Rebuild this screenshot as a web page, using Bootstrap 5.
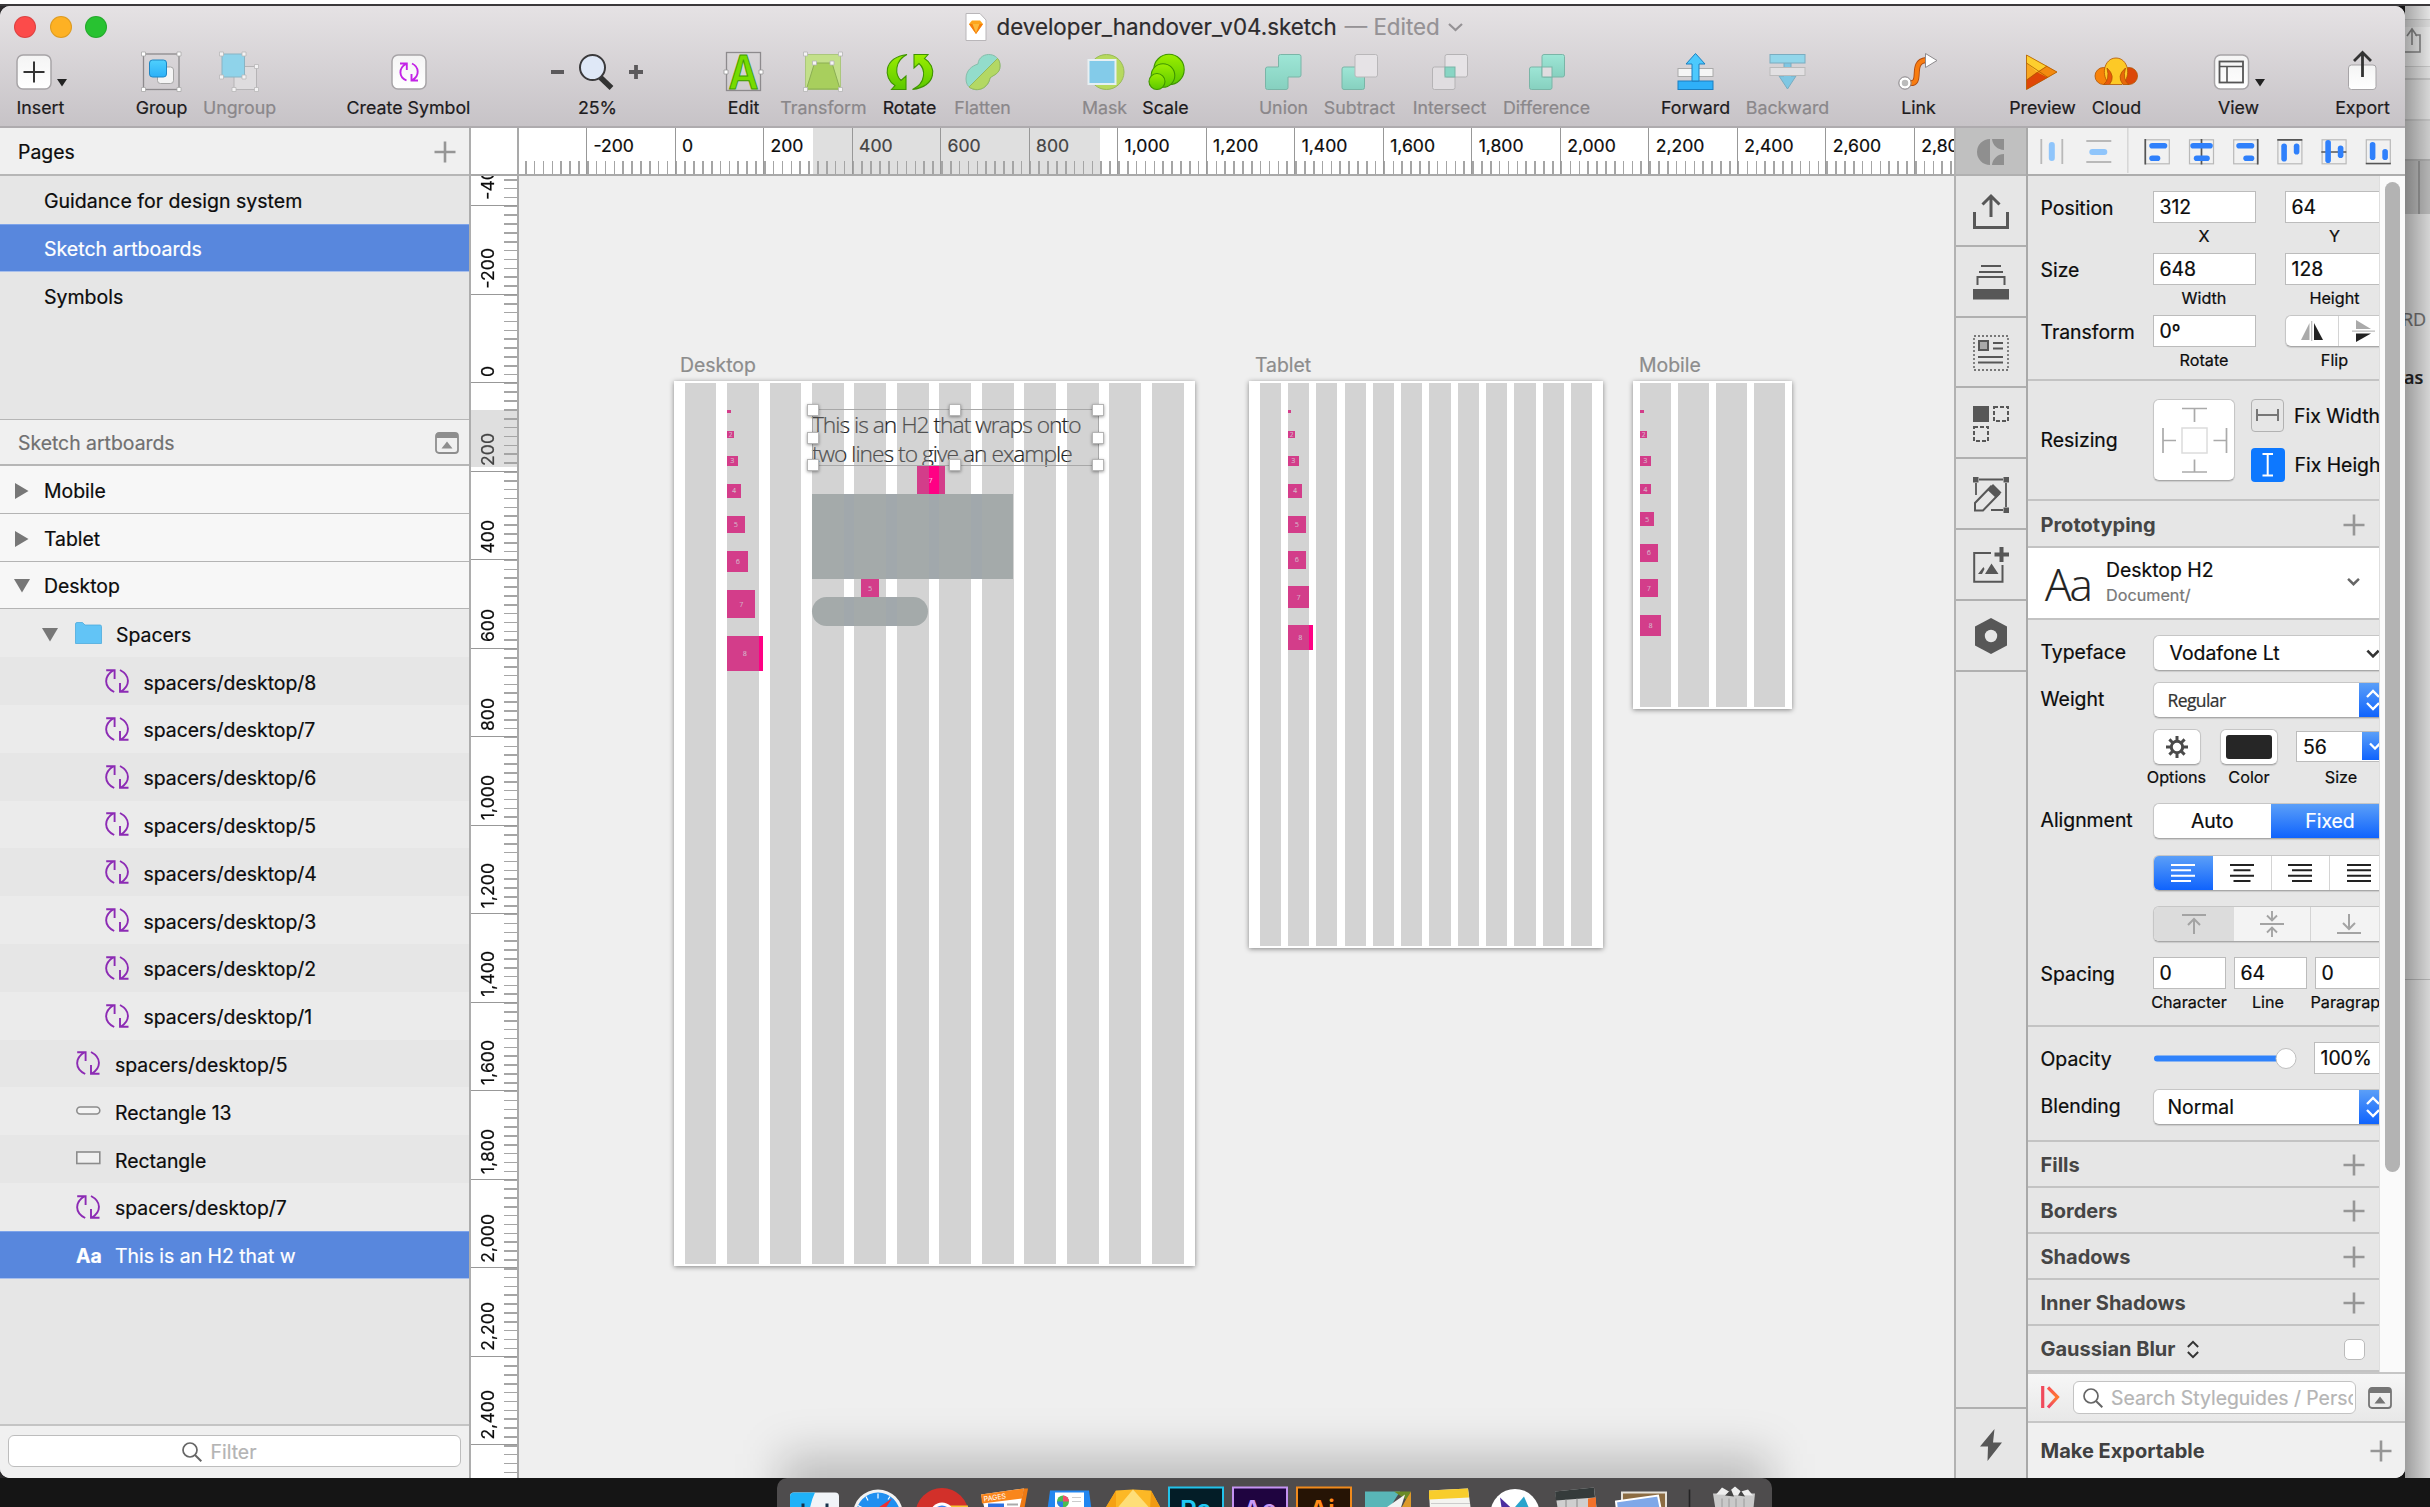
<!DOCTYPE html>
<html lang="en">
<head>
<meta charset="utf-8">
<title>developer_handover_v04.sketch</title>
<link rel="stylesheet" href="https://cdn.jsdelivr.net/npm/bootstrap@5.3.0/dist/css/bootstrap.min.css">
<script src="https://cdn.jsdelivr.net/npm/bootstrap@5.3.0/dist/js/bootstrap.bundle.min.js"></script>
<style>
:root{--u:.44265px;--line:#b6b6b6}
body{width:2430px;height:1507px;margin:0;overflow:hidden;background:#151515;font-family:Inter,"Liberation Sans",sans-serif;font-size:19.4px;line-height:24px;color:#0c0c0c;position:relative;-webkit-text-stroke:.22px}
svg{display:block;flex:none;overflow:visible}
.desk-top{height:6px;background:linear-gradient(#fff 0 4px,#3b393b 4px)}
.stage{height:1472px;background:#d0d0d0}
.appwin{width:2405px;height:1472px;background:#eee;border-radius:10px 10px 10px 10px;overflow:hidden;flex:none;position:relative;z-index:2}
.stage-left{background:linear-gradient(90deg,#2c2a2c 0 1200px,transparent 1200px)}
/* other window peeking out on the right */
.behind{width:25px;position:relative;overflow:hidden;background:#e2e2e2;color:#6f6f6f;font:18px/22px "Open Sans",sans-serif}
.behind .b1{height:14px;background:#efefef;border-bottom:1px solid #cfcfcf}
.behind .b2{height:40px;background:#eee;border-bottom:1px solid #ccc}
.behind .b3{height:13px;background:#e6e6e6;border-bottom:2px solid #c9c9c9}
.behind .b4{height:41px;border-bottom:2px solid #c8c8c8}
.behind .b5{height:40px;background:#d6d6d6;border-bottom:2px solid #b0b0b0}
.behind .b6{height:53px;background:#bdbdbd;padding-left:13px}
.behind .b6 i{display:block;width:2px;height:53px;background:#999}
.behind .b7{height:766px;border-bottom:1px solid #b9b9b9;background:#e0e0e0}
.behind:after{content:"";position:absolute;inset:0;background:linear-gradient(90deg,rgba(0,0,0,.3),rgba(0,0,0,.05))}
/* title and toolbar */
.chrome{height:122px;background:linear-gradient(#e5e2e4,#c7c3c7);border-bottom:2px solid #aeabae;flex:none}
.titlebar{height:42px;padding-left:14px}
.light{width:22px;height:22px;border-radius:50%;margin-right:13.5px;border:1px solid rgba(0,0,0,.12)}
.l-r{background:#fc4b4a}.l-y{background:#fdb124}.l-g{background:#28c231}
.doc-title{margin-left:844px;font-size:22.35px;color:#2d2b2d}
.doc-title span{color:#959295}
.toolset{height:78px}
.tool{flex:none;font-size:17.8px;line-height:22px;color:#1d1b1d;text-align:center;white-space:nowrap}
.tool.off{color:#8a878a}
.tool div{margin:5px -20px 0;padding-left:1px}
.t1{width:60px;margin-left:10px}.t2{width:70px;margin-left:56px}.t3{width:80px;margin-left:3px}.t4{width:130px;margin-left:64px}
.t5{width:100px;margin-left:74px}.t6{width:60px;margin-left:66px}.t7{width:90px;margin-left:5px}.t8{width:60px;margin-left:11px}
.t9{width:60px;margin-left:13px}.t10{width:50px;margin-left:67px}.t11{width:60px;margin-left:6px}.t12{width:60px;margin-left:58px}
.t13{width:80px;margin-left:6px}.t14{width:80px;margin-left:10px}.t15{width:90px;margin-left:12px}.t16{width:70px;margin-left:69px}
.t17{width:80px;margin-left:17px}.t18{width:50px;margin-left:66px}.t19{width:70px;margin-left:64px}.t20{width:60px;margin-left:9px}
.t21{width:60px;margin-left:62px}.t22{width:70px;margin-left:59px}
/* left column */
.layers{width:471px;border-right:2px solid #adadad;background:#e6e6e6;flex:none}
.lhead{height:48px;background:#f0f0f0;border-bottom:2px solid var(--line);padding:2px 13px 0 18px;flex:none}
.lhead.sub{height:47px;border-top:1.5px solid var(--line);color:#707070;padding-right:10px}
.pages-list{height:243px}
.lrow{height:47.8px;display:flex;align-items:center;padding-top:3px;flex:none}
.lrow.page{padding-left:44px;font-size:19.55px}
.lrow.sel{background:#5887dd;color:#fff;border-top:1px solid #7ea4ea;border-bottom:1px solid #a9c0ec}
.lrow.board{background:#f7f7f7;border-bottom:1.5px solid #b4b4b4;padding-left:14px;gap:15px}
.lrow.grp{background:#ebebeb;padding-left:42px}
.lrow.alt{background:#e6e6e6}.lrow.lite{background:#ebebeb}
.lrow.in3{padding-left:105px;gap:14.5px}.lrow.in2{padding-left:76px;gap:15px}
.lrow.in3 svg,.lrow.in2 svg{margin-top:-3px}
.lfoot{height:54px;border-top:2px solid #c4c4c4;background:#f0f0f0;padding:9px 8px}
.filter{height:32px;border:1.5px solid #bdbdbd;border-radius:6px;background:#fff;color:#b4b4b4;gap:9px;padding:2px 31px 0 0}
/* rulers */
.rulerx{height:48px;border-bottom:2px solid #a9a9a9;background:#fff}
.corner{width:48px;border-right:2px solid #a9a9a9;flex:none}
.xticks{position:relative;overflow:hidden;padding-left:67px;font-size:17.6px;background:repeating-linear-gradient(90deg,#a5a5a5 0 1.6px,transparent 1.6px 8.853px) 5.6px 33px/100% 14px no-repeat,linear-gradient(#dfdfdf,#dfdfdf) 294px 0/287px 100% no-repeat #fff}
.xticks span{width:88.53px;flex:none;border-left:1.6px solid #989898;padding:6px 0 0 6.5px}
.xticks .dim,.yticks .dim{color:#444}
.yticks{width:48px;border-right:2px solid #a9a9a9;flex:none;overflow:hidden;font-size:17.6px;background:repeating-linear-gradient(#a5a5a5 0 1.6px,transparent 1.6px 8.853px) 33px 2.6px/14px 100% no-repeat,linear-gradient(#dfdfdf,#dfdfdf) 0 234px/100% 57px no-repeat #fff}
.yticks div{height:88.53px;flex:none;border-bottom:1.6px solid #989898;display:flex;align-items:flex-end;padding:0 0 5px 6px;line-height:22px}
.yticks div:first-child{height:30px}
.yticks span{writing-mode:vertical-rl;transform:rotate(180deg);white-space:nowrap}
/* canvas */
.board-area{position:relative;overflow:hidden;background:#efefef}
.board-area:after{content:"";position:absolute;left:262px;bottom:-50px;width:988px;height:74px;background:rgba(0,0,0,.2);filter:blur(22px)}
.artboard{position:absolute;top:205.2px;background:#fff;box-shadow:0 1px 5px rgba(0,0,0,.45)}
.artboard .cap{position:absolute;left:6px;top:-28.5px;color:#8c8c8c;font-size:19.4px}
.gridcols{position:absolute;inset:2px 0;display:flex}
.gridcols i{background:rgba(149,149,149,.41);flex:none}
.ab-d{left:155px;width:calc(var(--u)*1176);height:885.3px}
.ab-d .gridcols{gap:calc(var(--u)*24);padding-left:calc(var(--u)*24)}.ab-d .gridcols i{width:calc(var(--u)*72)}
.ab-t{left:730px;width:calc(var(--u)*800);height:566.6px}
.ab-t .gridcols{gap:calc(var(--u)*16);padding-left:calc(var(--u)*24)}.ab-t .gridcols i{width:calc(var(--u)*48)}
.ab-m{left:1114px;width:calc(var(--u)*360);height:327.5px}
.ab-m .gridcols{gap:calc(var(--u)*16);padding-left:calc(var(--u)*16)}.ab-m .gridcols i{width:calc(var(--u)*70)}
.sq-col{position:absolute;top:calc(var(--u)*64);display:flex;flex-direction:column;gap:calc(var(--u)*40)}
.ab-d .sq-col{left:calc(var(--u)*120)}.ab-t .sq-col{left:calc(var(--u)*88)}.ab-m .sq-col{left:calc(var(--u)*16)}
.sq{background:#ff0084;color:#ffd0ea;display:flex;align-items:center;justify-content:center;font:300 6.5px/7px "Open Sans",sans-serif;overflow:hidden}
.s8{width:3.54px;height:3.54px;font-size:3px}.s16{width:7.08px;height:7.08px}.s24{width:10.62px;height:10.62px}.s32{width:14.16px;height:14.16px}.s40{width:17.7px;height:17.7px}.s48{width:21.25px;height:21.25px}.s56{width:24.8px;height:24.8px}.s64{width:28.33px;height:28.33px}.s80{width:35.4px;height:35.4px}
.free{position:absolute}
.h2text{left:137.9px;top:28.3px;width:287px;font:300 22.8px/28.3px "Open Sans",sans-serif;letter-spacing:-1px;color:#222;padding-top:2px;white-space:nowrap}
.gap-seven{left:242.5px;top:85px}.gap-five{left:187.2px;top:198.3px}
.box1,.box2{background:repeating-linear-gradient(90deg,#a4aaaa 0 31.9px,#a1a8ac 31.9px 42.5px)}
.box1{left:137.9px;top:113.3px;width:201.2px;height:85px}
.box2{left:137.9px;top:216px;width:116.2px;height:28.6px;border-radius:15px}
.selbox{left:137.9px;top:28.3px;width:286.8px;height:56.7px;border:1px solid #a8a8a8}
.selbox b{position:absolute;width:12px;height:12px;background:#fff;border:1px solid #b5b5b5;box-shadow:0 1px 3px rgba(0,0,0,.4);margin:-6px}
/* plugin strip */
.plug{width:74px;border-left:2px solid #b2b2b2;border-right:2px solid #a9a9a9;background:#e6e6e6;flex:none}
.plug div{height:70.8px;border-bottom:2px solid #b0b0b0;display:flex;align-items:center;justify-content:center;padding-top:2px}
.plug div:first-child{height:48px;background:#c0c0c0}
.plug div:last-child{border-top:2px solid #b0b0b0;border-bottom:0;margin-top:auto;height:71px}
/* inspector */
.insp{width:377px;flex:none;background:#e6e6e6}
.alignbar{height:48px;border-bottom:2px solid #adadad;background:#f1f1f1;padding:2px 0 0 13px;flex:none}
.props{width:351px;overflow:hidden;flex:none}
.sec{border-bottom:2px solid #c3c3c3;padding-left:12.5px}
.frow{display:flex;align-items:flex-start;white-space:nowrap}
.frow>.nm{width:112px;flex:none;line-height:31px;padding-top:2px}
.inp{height:31.5px;border:1.5px solid #bcbcbc;background:#fff;padding-left:6px;line-height:31.5px;flex:none}
.cellw{flex:none;text-align:center}
.tiny{font-size:16.2px;line-height:22px}
.subl{margin-top:2px}
.w103{width:103px}.ml30{margin-left:29px}
.pbtn{background:#fff;border:1px solid #c6c6c6;border-bottom-color:#a8a8a8;border-radius:6px;height:36px;box-shadow:0 1px 1px rgba(0,0,0,.12);flex:none}
.open-r{border-radius:6px 0 0 6px;border-right:0}
.stepper{width:40px;align-self:stretch;background:linear-gradient(#5b9ff8,#0f63fd);padding-left:7px;display:flex;align-items:center;flex:none}
.bhead{height:46px;border-bottom:2px solid #c3c3c3;padding:2px 14.5px 0 12.5px;font-weight:700;font-size:20px;color:#454545;display:flex;align-items:center;justify-content:space-between;-webkit-text-stroke:0}
.sbar{width:26px;background:#fafafa;border-left:1px solid #dedede;padding:6px 5px}
.sbar i{display:block;width:14.5px;height:990px;border-radius:8px;background:#b3b3b3}
.segon{background:linear-gradient(#5b9ff8,#0f63fd);color:#fff}
.seg{display:flex;overflow:hidden}
.seg>div{display:flex;align-items:center;justify-content:center;height:100%;flex:none}
.seg>div+div{border-left:1px solid #d4d4d4}
.sgbar{height:51px;border-top:2px solid #c6c6c6;border-bottom:2px solid #c6c6c6;background:linear-gradient(#f6f6f6,#e8e8e8);padding:0 13px}
.sginput{width:283px;height:33px;margin-left:14px;border:1.5px solid #c3c3c3;border-radius:6px;background:#fff;color:#b5b5b5;padding:1px 2px 0 9px;overflow:hidden}
.sginput span{overflow:hidden;white-space:nowrap;flex:1}
.mexp{height:55px;background:#f0f0f0;padding:0 13px 0 12.5px;font-weight:700;font-size:20px;color:#404040;-webkit-text-stroke:0}
/* dock */
.dock{left:777px;top:1477.5px;width:995px;height:44px;background:#4e4c4d;border-radius:10px 10px 0 0;z-index:4}
</style>
</head>
<body>
<svg width="0" height="0" class="position-absolute">
<defs>
<linearGradient id="gw" x1="0" y1="0" x2="0" y2="1"><stop offset="0" stop-color="#f4f4f4"/><stop offset="1" stop-color="#fff"/></linearGradient>
<linearGradient id="gg" x1="0" y1="0" x2="0" y2="1"><stop offset="0" stop-color="#9bee00"/><stop offset="1" stop-color="#5bc800"/></linearGradient>
<linearGradient id="gb" x1="0" y1="0" x2="0" y2="1"><stop offset="0" stop-color="#4fd0fd"/><stop offset="1" stop-color="#2bb0f8"/></linearGradient>
<linearGradient id="gt" x1="0" y1="0" x2="0" y2="1"><stop offset="0" stop-color="#9ee6d6"/><stop offset="1" stop-color="#86d0bf"/></linearGradient>
<linearGradient id="gz" x1="0" y1="0" x2="0" y2="1"><stop offset="0" stop-color="#fa5252"/><stop offset=".5" stop-color="#ff7a2e"/><stop offset="1" stop-color="#ef3f6a"/></linearGradient>
<symbol id="sym" viewBox="0 0 24 24"><path d="M9.2 23C-1.5 17.500-1.500 7 9 1M1.200 1.300H9.600V10M15 1C25.500 6.500 25.500 17 15.500 22.800M23.500 22.700H15V14" fill="none" stroke="#8c2bb4" stroke-width="1.9"/></symbol>
<symbol id="plus" viewBox="0 0 22 22"><path d="M11 .500V21.500M.500 11H21.500" stroke="#969696" stroke-width="2.600" fill="none"/></symbol>
<symbol id="arch" viewBox="0 0 24 22"><rect x="1" y="1" width="22" height="20" rx="3" fill="none" stroke="currentColor" stroke-width="1.800"/><path d="M1 6V3Q1 1 3 1H21Q23 1 23 3V6ZM6.500 16.500L12 9.500L17.500 16.500Z" fill="currentColor"/></symbol>
<symbol id="mag" viewBox="0 0 20 20"><circle cx="8" cy="8" r="7" fill="none" stroke="#666" stroke-width="1.700"/><path d="M13 13L19.300 19.300" stroke="#666" stroke-width="2"/></symbol>
<symbol id="updn" viewBox="0 0 14 22"><path d="M1 8L7 2L13 8M1 14L7 20L13 14" fill="none" stroke="currentColor" stroke-width="2.300"/></symbol>
<symbol id="chev" viewBox="0 0 12 8"><path d="M1 1.500L6 6.500L11 1.500" fill="none" stroke="currentColor" stroke-width="2.300"/></symbol>
</defs>
</svg>

<div class="desk-top"></div>
<div class="stage d-flex stage-left">
<main class="appwin d-flex flex-column">
<header class="chrome">
  <div class="titlebar d-flex align-items-center">
    <i class="light l-r"></i><i class="light l-y"></i><i class="light l-g"></i>
    <div class="doc-title d-flex align-items-center text-nowrap">
      <svg width="22" height="28" viewBox="0 0 22 28" style="margin-right:10px"><path d="M1 .500H15L21 7V27.500H1Z" fill="#fff" stroke="#b9b6b9"/><path d="M4 11L7 7.500H15L18 11L11 21Z" fill="#fda51c"/><path d="M4 11H18L11 21Z" fill="#f57d0c"/><path d="M7.500 11H14.500L11 20Z" fill="#fdb93a"/></svg>
      developer_handover_v04.sketch<span class="ms-2">— Edited</span>
      <svg class="ms-2" width="15" height="10" viewBox="0 0 15 10"><path d="M1 2L7.500 8L14 2" fill="none" stroke="#959295" stroke-width="2.200"/></svg>
    </div>
  </div>
  <nav class="toolset d-flex">
    <div class="tool t1"><svg width="60" height="44" viewBox="10 48 60 44"><rect x="17" y="55" width="34" height="34" rx="6" fill="url(#gw)" stroke="#a7a4a7" stroke-width="1.500"/><path d="M34 61.500V82.500M23.500 72H44.500" stroke="#333" stroke-width="2"/><path d="M57 79H67L62 86.500Z" fill="#222"/></svg><div>Insert</div></div>
    <div class="tool t2"><svg width="70" height="44" viewBox="126 48 70 44"><rect x="157.500" y="67" width="16" height="16.500" rx="3" fill="#f4f4f4" stroke="#a5a5a5"/><rect x="149.500" y="60" width="17" height="17" rx="3" fill="url(#gb)" stroke="#1e86c4"/><rect x="143.500" y="54" width="35.500" height="35.500" fill="none" stroke="#8d8a8d" stroke-width="1.300"/><path d="M141.500 52h4v4h-4zM177 52h4v4h-4zM141.500 87.500h4v4h-4zM177 87.500h4v4h-4z" fill="#fff" stroke="#aaa" stroke-width=".8"/></svg><div>Group</div></div>
    <div class="tool t3 off"><svg width="80" height="44" viewBox="199 48 80 44"><rect x="234" y="66.500" width="22.500" height="23" fill="#dedcde" stroke="#b6b4b6"/><rect x="222" y="54" width="22.500" height="23" fill="#8fd3ea" stroke="#8ab4c4"/><path d="M219.500 52h4v4h-4zM242 52h4v4h-4zM219.500 75h4v4h-4zM242 75h4v4h-4zM254.500 64.500h4v4h-4zM254.500 87.500h4v4h-4zM232 87.500h4v4h-4z" fill="#f4f3f4" stroke="#b9b7b9" stroke-width=".8"/></svg><div>Ungroup</div></div>
    <div class="tool t4"><svg width="130" height="44" viewBox="343 48 130 44"><rect x="392" y="55" width="34" height="34" rx="6" fill="url(#gw)" stroke="#a7a4a7" stroke-width="1.500"/><path d="M406.500 80.500C398.500 77 398.500 68 406 64M400 63.500H406.800V70M412 63.500C419.500 67 419.500 76 412.500 80M418 80.500H411.500V74" fill="none" stroke="#c324e6" stroke-width="1.900"/></svg><div>Create Symbol</div></div>
    <div class="tool t5"><svg width="100" height="44" viewBox="547 48 100 44"><path d="M551 72H564M629 72H643M636 65V79" stroke="#5b595b" stroke-width="3.800"/><path d="M600 77L611.500 88" stroke="#333" stroke-width="5.500"/><circle cx="592.500" cy="67.500" r="12.500" fill="#dfe8f7" stroke="#3b3a3c" stroke-width="2"/></svg><div>25%</div></div>
    <div class="tool t6"><svg width="60" height="44" viewBox="713 48 60 44"><rect x="726.500" y="52.500" width="34" height="38" fill="none" stroke="#8d8a8d" stroke-width="1.300"/><text x="743.500" y="89" text-anchor="middle" font-family="Inter,sans-serif" font-weight="600" font-size="46" textLength="30" lengthAdjust="spacingAndGlyphs" fill="#76dc00" stroke="#3f9a00" stroke-width="1">A</text><path d="M724 70h4v4h-4zM759 70h4v4h-4z" fill="#fff" stroke="#999" stroke-width=".8"/></svg><div>Edit</div></div>
    <div class="tool t7 off"><svg width="90" height="44" viewBox="778 48 90 44"><rect x="805.500" y="54.500" width="35" height="35" fill="#c3e08a" stroke="#abc77c"/><path d="M814.500 63H832L840 89H806.500Z" fill="#a8cf5d" stroke="#8bae54"/><path d="M803.500 52h4v4h-4zM838.500 52h4v4h-4zM803.500 87.500h4v4h-4zM838.500 87.500h4v4h-4zM812.500 61h4v4h-4zM830 61h4v4h-4z" fill="#f5f4f5" stroke="#b5b5b5" stroke-width=".8"/></svg><div>Transform</div></div>
    <div class="tool t8"><svg width="60" height="44" viewBox="879 48 60 44"><path d="M907 54.500C883 58 883 78 895 85.500L891.500 89.500H906V76L901 80.500C895 75 894 61 907 54.500ZM912.500 89.500C937 86 937 66 924.500 58.500L928 54.500H914V68L919 63.500C925.500 69 926.500 83 912.500 89.500Z" fill="url(#gg)" stroke="#3f9500" stroke-width="1.100"/></svg><div>Rotate</div></div>
    <div class="tool t9 off"><svg width="60" height="44" viewBox="952 48 60 44"><path d="M978 64C979 51 1000 51 1000 66C1000 74 993 75 990 78C988 93 966 94 966 79C966 70 972 66 978 64Z" fill="#93dccb" stroke="#86bdaa"/><path d="M997.500 58.500L969 87C978 93 988 88 990 78C993 75 1000 74 1000 66C1000 62 999 60 997.500 58.500Z" fill="#b3d864" stroke="#97b95c"/></svg><div>Flatten</div></div>
    <div class="tool t10 off"><svg width="50" height="44" viewBox="1079 48 50 44"><circle cx="1106.500" cy="72" r="17.500" fill="#b6d95f" stroke="#9aba5a"/><rect x="1088.500" y="60" width="27" height="24" fill="#83cbe9" stroke="#e7f0f3" stroke-width="2"/></svg><div>Mask</div></div>
    <div class="tool t11"><svg width="60" height="44" viewBox="1135 48 60 44"><g fill="url(#gg)" stroke="#3f9500" stroke-width="1.100"><circle cx="1169" cy="69.500" r="15.200"/><circle cx="1163" cy="75.500" r="11.800"/><circle cx="1157" cy="81.500" r="8"/></g></svg><div>Scale</div></div>
    <div class="tool t12 off"><svg width="60" height="44" viewBox="1253 48 60 44"><path d="M1280.500 54.500H1299Q1301 54.500 1301 56.500V75Q1301 77 1299 77H1288V87.500Q1288 89.500 1286 89.500H1267.500Q1265.500 89.500 1265.500 87.500V69Q1265.500 67 1267.500 67H1278.500V56.500Q1278.500 54.500 1280.500 54.500Z" fill="url(#gt)" stroke="#7ab5a7"/></svg><div>Union</div></div>
    <div class="tool t13 off"><svg width="80" height="44" viewBox="1319 48 80 44"><rect x="1342" y="67" width="22.500" height="22.500" rx="2" fill="url(#gt)" stroke="#7ab5a7"/><rect x="1355" y="54.500" width="22.500" height="22.500" rx="2" fill="#e6e3e6" stroke="#b9b7b9"/></svg><div>Subtract</div></div>
    <div class="tool t14 off"><svg width="80" height="44" viewBox="1409 48 80 44"><rect x="1432.500" y="67" width="22.500" height="22.500" rx="2" fill="#e0dde0" stroke="#b5b3b5"/><rect x="1445" y="54.500" width="22.500" height="22.500" rx="2" fill="#e6e3e6" stroke="#b5b3b5"/><rect x="1445" y="67" width="10" height="10" fill="#88d5c4" stroke="#7ab5a7"/></svg><div>Intersect</div></div>
    <div class="tool t15 off"><svg width="90" height="44" viewBox="1501 48 90 44"><rect x="1529.500" y="67" width="22.500" height="22.500" rx="2" fill="url(#gt)" stroke="#7ab5a7"/><rect x="1542" y="54.500" width="22.500" height="22.500" rx="2" fill="url(#gt)" stroke="#7ab5a7"/><rect x="1542" y="67" width="10" height="10" fill="#e0dde0" stroke="#7ab5a7"/></svg><div>Difference</div></div>
    <div class="tool t16"><svg width="70" height="44" viewBox="1660 48 70 44"><rect x="1678" y="68.500" width="35" height="8" fill="#f5f5f5" stroke="#aaa"/><rect x="1678" y="81" width="35" height="8.500" fill="#2fb0f8" stroke="#1c7fc0"/><path d="M1692 81V64H1686L1695.500 53.500L1705 64H1699V81Z" fill="#4cc9fd" stroke="#1c7fc0"/></svg><div>Forward</div></div>
    <div class="tool t17 off"><svg width="80" height="44" viewBox="1747 48 80 44"><path d="M1784 62V76H1779L1787.500 89L1796 76H1791V62Z" fill="#7fc7e3" stroke="#7aacc0"/><rect x="1770" y="67.500" width="35" height="8" fill="#e2e0e2" stroke="#bbb"/><rect x="1770" y="54.500" width="35" height="8.500" fill="#92d6ea" stroke="#7aacc0"/></svg><div>Backward</div></div>
    <div class="tool t18"><svg width="50" height="44" viewBox="1893 48 50 44"><path d="M1909 83C1924 85 1909 62 1926 60" fill="none" stroke="#b14d12" stroke-width="6"/><path d="M1909 83C1924 85 1909 62 1926 60" fill="none" stroke="#f87c10" stroke-width="4.200"/><circle cx="1905" cy="83" r="4.500" fill="#bbb" stroke="#fff" stroke-width="2.500"/><circle cx="1905" cy="83" r="6.200" fill="none" stroke="#8d8a8d"/><path d="M1925.500 53.500V67.500L1937 60.500Z" fill="#fff" stroke="#8d8a8d"/></svg><div>Link</div></div>
    <div class="tool t19"><svg width="70" height="44" viewBox="2007 48 70 44"><path d="M2026.500 55V89.500L2057 72Z" fill="#f8a71f"/><path d="M2026.500 55L2047 66L2037 72L2026.500 63Z" fill="#fdcf2e"/><path d="M2026.500 80L2037 72L2048 77.500L2026.500 89.500Z" fill="#df4607"/><path d="M2037 72L2047 66L2057 72L2048 77.500Z" fill="#f38a10"/><path d="M2026.500 55V89.500L2057 72ZM2026.500 63L2048 77.500M2026.500 80L2047 66" fill="none" stroke="#b05a00" stroke-width=".8"/></svg><div>Preview</div></div>
    <div class="tool t20"><svg width="60" height="44" viewBox="2086 48 60 44"><g stroke="#b35400" stroke-width=".8"><circle cx="2103.500" cy="76" r="8.500" fill="#f7820a"/><circle cx="2129" cy="76" r="8.500" fill="#dc4808"/><path d="M2110 84.500C2100 76 2104 58 2116 58C2128 58 2132 76 2122 84.500Z" fill="#fdc926"/><path d="M2107 68Q2116 76 2109.500 84.500H2103.500Q2110 80 2107 68Z" fill="#e8590a"/><path d="M2125.500 68Q2116 76 2123 84.500H2129Q2122 80 2125.500 68Z" fill="#e8690a"/></g></svg><div>Cloud</div></div>
    <div class="tool t21"><svg width="60" height="44" viewBox="2208 48 60 44"><rect x="2214.500" y="55" width="34" height="34" rx="6" fill="url(#gw)" stroke="#a7a4a7" stroke-width="1.500"/><rect x="2219.500" y="61.500" width="23.500" height="21" fill="none" stroke="#555" stroke-width="1.800"/><path d="M2219.500 66.500H2243M2227 66.500V82.500" stroke="#555" stroke-width="1.600"/><path d="M2255 79H2265L2260 86.500Z" fill="#222"/></svg><div>View</div></div>
    <div class="tool t22"><svg width="70" height="44" viewBox="2327 48 70 44"><rect x="2348.500" y="65" width="27.500" height="24.500" rx="3" fill="url(#gw)" stroke="#a7a4a7"/><path d="M2362.500 77V54M2354 61L2362.500 52.500L2371 61" fill="none" stroke="#333" stroke-width="2.800"/></svg><div>Export</div></div>
  </nav>
</header>

<div class="d-flex flex-grow-1" style="min-height:0">
<aside class="layers d-flex flex-column">
  <div class="lhead d-flex align-items-center justify-content-between">Pages<svg width="22" height="22"><use href="#plus"/></svg></div>
  <div class="pages-list">
    <div class="lrow page">Guidance for design system</div>
    <div class="lrow page sel">Sketch artboards</div>
    <div class="lrow page">Symbols</div>
  </div>
  <div class="lhead sub d-flex align-items-center justify-content-between">Sketch artboards<svg width="24" height="22" color="#8e8e8e"><use href="#arch"/></svg></div>
  <div class="lrow board"><svg width="15" height="16"><path d="M1 0L14.500 8L1 16Z" fill="#777"/></svg>Mobile</div>
  <div class="lrow board"><svg width="15" height="16"><path d="M1 0L14.500 8L1 16Z" fill="#777"/></svg>Tablet</div>
  <div class="lrow board"><svg width="15" height="14"><path d="M0 0H16L8 13.500Z" fill="#777"/></svg>Desktop</div>
  <div class="lrow grp"><svg width="16" height="14"><path d="M0 0H16L8 13.500Z" fill="#777"/></svg><svg width="27" height="22" style="margin:-4px 14px 0 17px"><path d="M.500 2Q.500 .500 2 .500H7.500L10 3H25Q26.500 3 26.500 4.500V21.500H.500Z" fill="#62c4f6" stroke="#4dabdd" stroke-width=".8"/></svg>Spacers</div>
  <div class="lrow in3 alt"><svg width="24" height="24"><use href="#sym"/></svg>spacers/desktop/8</div>
  <div class="lrow in3 lite"><svg width="24" height="24"><use href="#sym"/></svg>spacers/desktop/7</div>
  <div class="lrow in3 alt"><svg width="24" height="24"><use href="#sym"/></svg>spacers/desktop/6</div>
  <div class="lrow in3 lite"><svg width="24" height="24"><use href="#sym"/></svg>spacers/desktop/5</div>
  <div class="lrow in3 alt"><svg width="24" height="24"><use href="#sym"/></svg>spacers/desktop/4</div>
  <div class="lrow in3 lite"><svg width="24" height="24"><use href="#sym"/></svg>spacers/desktop/3</div>
  <div class="lrow in3 alt"><svg width="24" height="24"><use href="#sym"/></svg>spacers/desktop/2</div>
  <div class="lrow in3 lite"><svg width="24" height="24"><use href="#sym"/></svg>spacers/desktop/1</div>
  <div class="lrow in2 alt"><svg width="24" height="24"><use href="#sym"/></svg>spacers/desktop/5</div>
  <div class="lrow in2 lite"><svg width="24" height="12"><rect x=".8" y="2" width="23" height="7" rx="3.500" fill="#f4f4f4" stroke="#8c8c8c" stroke-width="1.600"/></svg>Rectangle 13</div>
  <div class="lrow in2 alt"><svg width="24" height="16"><rect x=".8" y="1" width="23" height="11.500" fill="#f0f0f0" stroke="#8c8c8c" stroke-width="1.600"/></svg>Rectangle</div>
  <div class="lrow in2 lite"><svg width="24" height="24"><use href="#sym"/></svg>spacers/desktop/7</div>
  <div class="lrow in2 sel"><b style="width:24px">Aa</b>This is an H2 that w</div>
  <div class="lfoot mt-auto"><div class="filter d-flex align-items-center justify-content-center"><svg width="20" height="20"><use href="#mag"/></svg>Filter</div></div>
</aside>

<section class="d-flex flex-column flex-grow-1" style="min-width:0">
  <div class="rulerx d-flex">
    <div class="corner"></div>
    <div class="xticks d-flex flex-grow-1">
      <span>-200</span><span>0</span><span>200</span><span class="dim">400</span><span class="dim">600</span><span class="dim">800</span><span>1,000</span><span>1,200</span><span>1,400</span><span>1,600</span><span>1,800</span><span>2,000</span><span>2,200</span><span>2,400</span><span>2,600</span><span>2,800</span>
    </div>
  </div>
  <div class="d-flex flex-grow-1" style="min-height:0">
    <div class="yticks d-flex flex-column">
      <div><span>-400</span></div><div><span>-200</span></div><div><span>0</span></div><div><span class="dim">200</span></div><div><span>400</span></div><div><span>600</span></div><div><span>800</span></div><div><span>1,000</span></div><div><span>1,200</span></div><div><span>1,400</span></div><div><span>1,600</span></div><div><span>1,800</span></div><div><span>2,000</span></div><div><span>2,200</span></div><div><span>2,400</span></div>
    </div>
    <div class="board-area flex-grow-1">
      <div class="artboard ab-d"><span class="cap">Desktop</span>
        <div class="sq-col"><div class="sq s8"></div><div class="sq s16">2</div><div class="sq s24">3</div><div class="sq s32">4</div><div class="sq s40">5</div><div class="sq s48">6</div><div class="sq s64">7</div><div class="sq s80">8</div></div>
        <div class="free h2text">This is an H2 that wraps onto<br>two lines to give an example</div>
        <div class="free sq s64 gap-seven">7</div><div class="free sq s40 gap-five">5</div>
        <div class="gridcols"><i></i><i></i><i></i><i></i><i></i><i></i><i></i><i></i><i></i><i></i><i></i><i></i></div>
        <div class="free box1"></div><div class="free box2"></div>
        <div class="free selbox"><b style="left:0;top:0"></b><b style="left:50%;top:0"></b><b style="left:100%;top:0"></b><b style="left:0;top:50%"></b><b style="left:100%;top:50%"></b><b style="left:0;top:100%"></b><b style="left:50%;top:100%"></b><b style="left:100%;top:100%"></b></div>
      </div>
      <div class="artboard ab-t"><span class="cap">Tablet</span>
        <div class="sq-col"><div class="sq s8"></div><div class="sq s16">2</div><div class="sq s24">3</div><div class="sq s32">4</div><div class="sq s40">5</div><div class="sq s40">6</div><div class="sq s48">7</div><div class="sq s56">8</div></div>
        <div class="gridcols"><i></i><i></i><i></i><i></i><i></i><i></i><i></i><i></i><i></i><i></i><i></i><i></i></div>
      </div>
      <div class="artboard ab-m"><span class="cap">Mobile</span>
        <div class="sq-col"><div class="sq s8"></div><div class="sq s16">2</div><div class="sq s24">3</div><div class="sq s24">4</div><div class="sq s32">5</div><div class="sq s40">6</div><div class="sq s40">7</div><div class="sq s48">8</div></div>
        <div class="gridcols"><i></i><i></i><i></i><i></i></div>
      </div>
    </div>
  </div>
</section>

<aside class="plug d-flex flex-column">
  <div><svg width="26" height="26"><path d="M12 0V26A13 13 0 0 1 12 0ZM14 0H26V11A12 12 0 0 1 14 0ZM14 26H26V15A12 12 0 0 0 14 26Z" fill="#8f8f8f"/></svg></div>
  <div><svg width="36" height="36"><path d="M1.500 19V34.500H34.500V19M18 24V3M9.500 11.500L18 3L26.500 11.500" fill="none" stroke="#575757" stroke-width="3"/></svg></div>
  <div><svg width="36" height="36"><path d="M8 2H28M6 8H30M4.500 21V13H31.500V21" fill="none" stroke="#575757" stroke-width="2"/><rect x="0" y="25" width="36" height="10.500" fill="#575757"/></svg></div>
  <div><svg width="36" height="36"><rect x="1" y="1" width="34" height="34" fill="none" stroke="#777" stroke-width="1.800" stroke-dasharray="2 2"/><rect x="6" y="6" width="9" height="9" fill="#aaa" stroke="#575757" stroke-width="2"/><path d="M20 8H30M20 13.500H30M5 22H30M5 27.500H30" stroke="#575757" stroke-width="2"/></svg></div>
  <div><svg width="36" height="36"><rect width="16" height="16" fill="#575757"/><rect x="21" y="1" width="14" height="14" fill="none" stroke="#575757" stroke-width="2" stroke-dasharray="4 2"/><rect x="1" y="21" width="14" height="14" fill="none" stroke="#575757" stroke-width="2" stroke-dasharray="4 2"/></svg></div>
  <div><svg width="36" height="36"><path d="M6 2.500H30M3 6V18M33 6V30M18 33H30" fill="none" stroke="#575757" stroke-width="1.800"/><path d="M0 0h5.500v5.500H0zM30.500 0h5.500v5.500h-5.500zM30.500 30.500h5.500v5.500h-5.500z" fill="#575757"/><path d="M2 33.500V26L18 9.500L26 17L10 33.500Z" fill="none" stroke="#575757" stroke-width="2"/><path d="M14.500 13L20 7L28.500 15.500L23 21Z" fill="#575757"/></svg></div>
  <div><svg width="36" height="36"><path d="M18 6H1.200V34.800H29.500V18" fill="none" stroke="#575757" stroke-width="2"/><path d="M28.500 0V15M21.500 7.500H36" stroke="#575757" stroke-width="4"/><path d="M12 27L18.500 16.500L25.500 27ZM5 27L10.500 20L11.500 22L9 27Z" fill="#575757"/></svg></div>
  <div><svg width="36" height="36"><path d="M18 0L34 8.500V27.500L18 36L2 27.500V8.500Z" fill="#575757"/><circle cx="18" cy="18" r="6.200" fill="#e6e6e6"/></svg></div>
  <div><svg width="22" height="32"><path d="M14.500 0L0 17.500H8L7.500 32L22 13.500H13Z" fill="#575757"/></svg></div>
</aside>

<aside class="insp d-flex flex-column">
  <div class="alignbar d-flex align-items-center">
    <svg width="351" height="26" viewBox="0.7 0 351 26">
      <path d="M1 0V25M22 0V25M46 2H71M46 23H71" stroke="#b9b9b9" stroke-width="1.800"/><rect x="8.500" y="3" width="6" height="19" rx="3" fill="#8fc5fb"/><rect x="49" y="10" width="18" height="6" rx="3" fill="#8fc5fb"/><path d="M87.500-11V34" stroke="#d5d5d5" stroke-width="1.500"/>
      <g fill="none" stroke="#b9b9b9" stroke-width="1.200"><rect x="105" y=".800" width="24" height="24"/><rect x="149.200" y=".800" width="24" height="24"/><rect x="193.400" y=".800" width="24" height="24"/><rect x="237.600" y=".800" width="24" height="24"/><rect x="281.800" y=".800" width="24" height="24"/><rect x="326" y=".800" width="24" height="24"/></g>
      <path d="M105 0V25.500M161.200 0V25.500M217.400 0V25.500M237 .800H262M281 13H306M325.500 24.500H350.500" stroke="#555" stroke-width="1.700"/>
      <g fill="#2f80fb"><rect x="109" y="4" width="18" height="5.600" rx="2.800"/><rect x="109" y="16.500" width="11" height="5.600" rx="2.800"/><rect x="150" y="4" width="22.500" height="5.600" rx="2.800"/><rect x="153.500" y="16.500" width="16" height="5.600" rx="2.800"/><rect x="196" y="4" width="18" height="5.600" rx="2.800"/><rect x="203" y="16.500" width="11" height="5.600" rx="2.800"/><rect x="241" y="4.500" width="5.600" height="18" rx="2.800"/><rect x="253.500" y="4.500" width="5.600" height="11" rx="2.800"/><rect x="285" y="1" width="5.600" height="23" rx="2.800"/><rect x="297.500" y="6.500" width="5.600" height="12.500" rx="2.800"/><rect x="329.500" y="3" width="5.600" height="18" rx="2.800"/><rect x="342" y="10" width="5.600" height="11" rx="2.800"/></g>
    </svg>
  </div>
  <div class="d-flex" style="height:1196px">
  <div class="props">
    <div class="sec" style="height:205px;padding-top:15px">
      <div class="frow" style="height:62px"><span class="nm">Position</span><div class="cellw w103"><div class="inp text-start">312</div><div class="tiny subl">X</div></div><div class="cellw w103 ml30"><div class="inp text-start">64</div><div class="tiny subl" style="margin-left:-3px">Y</div></div></div>
      <div class="frow" style="height:62px"><span class="nm">Size</span><div class="cellw w103"><div class="inp text-start">648</div><div class="tiny subl">Width</div></div><div class="cellw w103 ml30"><div class="inp text-start">128</div><div class="tiny subl" style="margin-left:-3px">Height</div></div></div>
      <div class="frow"><span class="nm">Transform</span><div class="cellw w103"><div class="inp text-start">0º</div><div class="tiny subl">Rotate</div></div><div class="cellw w103 ml30"><div class="pbtn open-r seg" style="height:31.500px"><div style="width:52px"><svg width="24" height="20"><path d="M9.500 2V19H1Z" fill="#aaa"/><path d="M14 2V19H23Z" fill="#222"/><path d="M11.700 0V20" stroke="#bbb" stroke-width="1.200"/></svg></div><div style="width:50px"><svg width="24" height="22"><path d="M5 0V9H20Z" fill="#aaa"/><path d="M5 22V13.500H20Z" fill="#222"/><path d="M1 11.200H24" stroke="#bbb" stroke-width="1.200"/></svg></div></div><div class="tiny subl" style="margin-left:-3px">Flip</div></div></div>
    </div>
    <div class="sec frow" style="height:120px;padding-top:18px"><span class="nm" style="padding-top:26px">Resizing</span>
      <div class="pbtn d-flex" style="width:82px;height:82px"><svg width="80" height="80"><path d="M28 8.500H53M40.500 8.500V22M28 72H53M40.500 72V59.500M9 28V53M9 40.500H22M72.500 28V53M72.500 40.500H59.500" fill="none" stroke="#aaa" stroke-width="1.700"/><rect x="28" y="28" width="25" height="25" fill="none" stroke="#dcdcdc" stroke-width="1.500"/></svg></div>
      <div class="d-flex flex-column" style="margin-left:16.500px;gap:16px">
        <div class="d-flex align-items-center"><div style="width:33px;height:33px;border:1.500px solid #b2b2b2;border-radius:4px;padding:4px"><svg width="23" height="22"><path d="M1 5V17M22 5V17M1 11H22" stroke="#777" stroke-width="2"/></svg></div><span style="margin-left:10px">Fix Width</span></div>
        <div class="d-flex align-items-center"><div style="width:33.500px;height:33.500px;background:#0d78ff;border-radius:4px;padding:5px 5px"><svg width="23" height="24"><path d="M6.500 1H17M6.500 22.500H17M11.700 1V22.500" stroke="#fff" stroke-width="2"/></svg></div><span style="margin-left:10px">Fix Height</span></div>
      </div>
    </div>
    <div class="bhead" style="height:47px">Prototyping<svg width="22" height="22"><use href="#plus"/></svg></div>
    <div class="d-flex align-items-center bg-white" style="height:72px;border-bottom:2px solid #c3c3c3;padding:0 19px 0 17px"><span style="font:300 44px/48px 'Open Sans',sans-serif;width:61px;letter-spacing:-2px;color:#222;padding-top:2px">Aa</span><div style="margin-top:-1px"><div style="line-height:26px">Desktop H2</div><div class="tiny" style="color:#777;line-height:25px">Document/</div></div><svg class="ms-auto mb-1" width="13" height="9" color="#666"><use href="#chev"/></svg></div>
    <div class="sec" style="height:407px;padding-top:15px">
      <div class="frow" style="height:47px"><span class="nm">Typeface</span><div class="pbtn open-r d-flex align-items-center" style="width:240px;padding-left:16px">Vodafone Lt<svg style="margin-left:auto;margin-right:13px" width="14" height="9" color="#333"><use href="#chev"/></svg></div></div>
      <div class="frow" style="height:47px"><span class="nm">Weight</span><div class="pbtn open-r d-flex align-items-center overflow-hidden" style="width:246px;padding-left:14px;color:#333"><span style="font:17.500px 'Open Sans',sans-serif;letter-spacing:-.6px">Regular</span><div class="stepper ms-auto text-white"><svg width="14" height="22"><use href="#updn"/></svg></div></div></div>
      <div class="frow" style="height:74px"><span class="nm"></span>
        <div class="cellw" style="width:48px"><div class="pbtn d-flex align-items-center justify-content-center"><svg width="22" height="22" viewBox="-11 -11 22 22"><circle r="5.700" fill="none" stroke="#4a4a4a" stroke-width="3"/><path d="M0-11V-6M0 6V11M-11 0H-6M6 0H11M-7.600-7.600L-4.500-4.500M4.500 4.500L7.600 7.600M-7.600 7.600L-4.500 4.500M4.500-4.500L7.600-7.600" stroke="#4a4a4a" stroke-width="3"/></svg></div><div class="tiny" style="margin:1px -10px">Options</div></div>
        <div class="cellw" style="width:58px;margin-left:19.500px"><div class="pbtn p-1"><div style="height:24px;background:#262626;border-radius:3px;margin:1px 1px"></div></div><div class="tiny" style="margin-top:1px">Color</div></div>
        <div class="cellw" style="width:90px;margin-left:18px"><div class="inp d-flex text-start" style="height:31px;margin:2px 0 3px">56<div class="stepper text-white" style="margin-left:35px;height:28px"><svg width="12" height="8"><use href="#chev"/></svg></div></div><div class="tiny" style="margin-top:4px">Size</div></div>
      </div>
      <div class="frow" style="height:51.500px"><span class="nm">Alignment</span><div class="pbtn open-r seg" style="width:246px"><div style="width:117.500px">Auto</div><div class="segon border-0" style="width:118px">Fixed</div><div class="segon border-0" style="width:12px"></div></div></div>
      <div class="frow" style="height:51.500px"><span class="nm"></span><div class="pbtn open-r seg" style="width:246px"><div class="segon" style="width:59px"><svg width="24" height="20"><path d="M0 2H24M0 7.200H20M0 12.700H24M0 18H20" stroke="#fff" stroke-width="2"/></svg></div><div class="border-0" style="width:58px"><svg width="24" height="20"><path d="M0 2H24M3.500 7.200H20.500M0 12.700H24M3.500 18H20.500" stroke="#222" stroke-width="2"/></svg></div><div style="width:58.500px"><svg width="24" height="20"><path d="M0 2H24M4 7.200H24M0 12.700H24M4 18H24" stroke="#222" stroke-width="2"/></svg></div><div style="width:58px"><svg width="24" height="20"><path d="M0 2H24M0 7.200H24M0 12.700H24M0 18H24" stroke="#222" stroke-width="2"/></svg></div></div></div>
      <div class="frow" style="height:51px"><span class="nm"></span><div class="pbtn open-r seg" style="width:246px;background:#f3f3f3"><div style="width:80.500px;background:#dcdcdc"><svg width="24" height="20"><path d="M0 1H24M12 20V5M6 11L12 5L18 11" fill="none" stroke="#a3a3a3" stroke-width="2"/></svg></div><div class="border-0" style="width:76px"><svg width="24" height="26"><path d="M0 13H24M12 0V9M7 4.500L12 9.500L17 4.500M12 26V17M7 21.500L12 16.500L17 21.500" fill="none" stroke="#a3a3a3" stroke-width="1.900"/></svg></div><div style="width:77px"><svg width="24" height="20"><path d="M0 19H24M12 0V15M6 9L12 15L18 9" fill="none" stroke="#a3a3a3" stroke-width="2"/></svg></div></div></div>
      <div class="frow"><span class="nm">Spacing</span>
        <div class="cellw" style="width:73px"><div class="inp text-start">0</div><div class="tiny" style="margin:2px -8px">Character</div></div>
        <div class="cellw" style="width:73px;margin-left:8px"><div class="inp text-start">64</div><div class="tiny" style="margin-top:2px;margin-left:-4px">Line</div></div>
        <div class="cellw" style="width:80px;margin-left:8px"><div class="inp text-start">0</div><div class="tiny text-start" style="margin-top:2px;margin-left:-4px">Paragraph</div></div>
      </div>
    </div>
    <div class="sec" style="height:115px;padding-top:15px">
      <div class="frow" style="height:47px"><span class="nm">Opacity</span><svg width="134" height="32" style="margin-left:1px"><path d="M3 16.500H125" stroke="#2f82fb" stroke-width="6" stroke-linecap="round"/><circle cx="132" cy="16.500" r="10" fill="#fff" stroke="#c0c0c0"/></svg><div class="inp" style="width:80px;margin-left:26px">100%</div></div>
      <div class="frow"><span class="nm">Blending</span><div class="pbtn open-r d-flex align-items-center overflow-hidden" style="width:246px;padding-left:14px">Normal<div class="stepper ms-auto text-white"><svg width="14" height="22"><use href="#updn"/></svg></div></div></div>
    </div>
    <div class="bhead">Fills<svg width="22" height="22"><use href="#plus"/></svg></div>
    <div class="bhead">Borders<svg width="22" height="22"><use href="#plus"/></svg></div>
    <div class="bhead">Shadows<svg width="22" height="22"><use href="#plus"/></svg></div>
    <div class="bhead">Inner Shadows<svg width="22" height="22"><use href="#plus"/></svg></div>
    <div class="bhead"><span class="d-flex align-items-center">Gaussian Blur<svg style="margin-left:12px" width="12" height="19" color="#333"><use href="#updn"/></svg></span><i style="width:21px;height:21px;border:1.500px solid #bbb;border-radius:5px;background:#fff"></i></div>
  </div>
  <div class="sbar"><i></i></div>
  </div>
  <div class="sgbar d-flex align-items-center"><svg width="18" height="23"><path d="M7 1.500L16.500 11L7 21.500" fill="none" stroke="url(#gz)" stroke-width="3.200"/><path d="M1.700 0V22" stroke="#f04a5c" stroke-width="3.200"/></svg><div class="sginput d-flex align-items-center"><svg width="20" height="20" class="me-2"><use href="#mag"/></svg><span>Search Styleguides / Personas</span></div><svg class="ms-auto" width="24" height="22" color="#757575"><use href="#arch"/></svg></div>
  <div class="mexp d-flex align-items-center justify-content-between">Make Exportable<svg width="22" height="22"><use href="#plus"/></svg></div>
</aside>
</div>
</main>
<div class="behind">
  <div class="b1"></div><div class="b2"><svg width="18" height="27" style="margin:7px 0 0 0"><path d="M2 9L7 2L12 9M7 2V18M10 8H15V25H-2" fill="none" stroke="#888" stroke-width="1.600"/></svg></div><div class="b3"></div><div class="b4"></div><div class="b5"></div><div class="b6"><i></i></div>
  <div class="b7"><div style="padding-top:94px;margin-left:-3px">RD</div><div style="padding-top:36px;margin-left:-1px;color:#222;font-weight:600;font-size:18px">as</div></div>
</div>
</div>

<div class="dock position-absolute">
<svg width="995" height="30" viewBox="777 1477.500 995 30">
  <rect x="790" y="1492" width="49" height="40" rx="4" fill="#f1f4f8"/><path d="M794 1492H815Q810 1502 808 1520H790V1496Q790 1492 794 1492Z" fill="#1fb2f8"/><path d="M803 1503V1510M827 1503V1510" stroke="#16324c" stroke-width="3"/>
  <circle cx="878" cy="1514" r="25" fill="#f2f2f2"/><circle cx="878" cy="1514" r="22" fill="#1f8ff0"/><path d="M892 1498L880 1516L874 1510Z" fill="#ef2f2f"/><path d="M878 1493V1498M866 1496L868 1500M890 1496L888 1499M858 1505L862 1507" stroke="#fff" stroke-width="1.200"/>
  <circle cx="942" cy="1514" r="26.500" fill="#d2302a"/><path d="M942 1505H968V1520H942Z" fill="#f6c631"/><circle cx="942" cy="1514" r="12" fill="#fff"/><circle cx="942" cy="1514" r="9" fill="#3d82f0"/>
  <path d="M981 1494L1024 1488L1020 1510H985Z" fill="#fff"/><path d="M981 1494L1024 1488L1022 1498L982 1503Z" fill="#f9861c"/><path d="M1024 1488H1028L1024 1510H1019Z" fill="#ee7a14"/><text x="984" y="1501" font-size="7" fill="#fff" font-family="Inter,sans-serif" transform="rotate(-8 984 1501)">PAGES</text><rect x="988" y="1503" width="16" height="8" fill="#2b6fe0"/><path d="M1007 1504H1018" stroke="#aaa" stroke-width="2"/>
  <path d="M1050 1490H1089L1093 1520H1046Z" fill="#2186f0"/><rect x="1055" y="1492" width="29" height="20" fill="#fff"/><circle cx="1063" cy="1501" r="6" fill="#49bd52"/><path d="M1063 1501V1495A6 6 0 0 1 1069 1501Z" fill="#f34c6d"/><path d="M1063 1501H1057A6 6 0 0 0 1063 1507Z" fill="#2b7de9"/><path d="M1072 1497H1081M1072 1501H1081" stroke="#ccc"/>
  <path d="M1116 1490L1133 1489L1151 1490L1162 1510H1104Z" fill="#fcb826"/><path d="M1116 1490L1104 1510H1116Z" fill="#f5a114"/><path d="M1151 1490L1162 1510H1150Z" fill="#f09a12"/><path d="M1133 1489L1117 1508H1150Z" fill="#fede78"/>
  <g font-family="Inter,sans-serif" font-weight="600" font-size="26"><rect x="1169" y="1487" width="54" height="40" fill="#031d27" stroke="#22c2ea" stroke-width="2"/><text x="1180" y="1518" fill="#1fc8f4">Ps</text><rect x="1233" y="1487" width="54" height="40" fill="#1f0440" stroke="#c593f2" stroke-width="2"/><text x="1243" y="1518" fill="#c79bf7">Ae</text><rect x="1297" y="1487" width="54" height="40" fill="#261405" stroke="#f08a1c" stroke-width="2"/><text x="1309" y="1518" fill="#ff8c1a">Ai</text></g>
  <path d="M1365 1491H1400L1388 1510H1365Z" fill="#59b6b8"/><path d="M1394 1491H1411L1406 1499Z" fill="#6b8b26"/><path d="M1411 1491V1510H1400L1406 1499Z" fill="#dd9a2a"/><path d="M1405 1494L1400 1510H1382Z" fill="#f3f3f3"/>
  <path d="M1429 1490L1468 1488L1471 1510H1430Z" fill="#f4f4f0"/><path d="M1429 1490L1468 1488L1469 1497L1429 1499Z" fill="#f8cd2c"/><path d="M1431 1503H1470" stroke="#ccc"/>
  <circle cx="1515" cy="1513" r="24.500" fill="#fff"/><path d="M1500 1497L1514 1510H1502Z" fill="#4c2ea0"/><path d="M1524 1496L1512 1510H1530Z" fill="#29a4cc"/>
  <path d="M1555 1491L1594 1487L1597 1510H1558Z" fill="#cfcfcf"/><path d="M1555 1491L1594 1487L1595 1497L1556 1500Z" fill="#353b3b"/><path d="M1588 1498L1596 1497V1510H1588Z" fill="#f2712a"/><path d="M1566 1499V1510M1577 1498V1510" stroke="#888"/>
  <rect x="1622" y="1492" width="44" height="20" fill="#8c6c42" stroke="#e6e2da" stroke-width="2"/><path d="M1616 1501L1658 1495L1661 1510H1617Z" fill="#7fa8e8" stroke="#fff" stroke-width="2"/>
  <path d="M1689.500 1489V1507" stroke="#242324" stroke-width="1.600"/>
  <path d="M1713 1493H1755L1753 1512H1716Z" fill="#c9c9c9"/><path d="M1716 1494L1722 1487L1729 1491L1735 1486L1741 1491L1748 1489L1753 1495Z" fill="#eee"/><path d="M1725 1495L1731 1489L1734 1496ZM1738 1495L1741 1490L1745 1496Z" fill="#444"/><path d="M1722 1498V1510M1729 1498V1510M1736 1498V1510M1744 1498V1510" stroke="#9a9a9a"/>
</svg>
</div>
</body>
</html>
